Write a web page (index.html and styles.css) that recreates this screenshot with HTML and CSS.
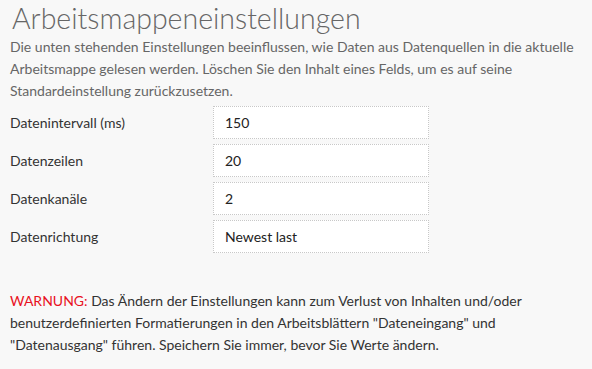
FILE: index.html
```html
<!doctype html>
<html lang="de">
    <head>
        <meta charset="UTF-8">
        <meta name="viewport" content="width=device-width, initial-scale=1.0">
        <title>Arbeitsmappeneinstellungen</title>

        <link rel="stylesheet" href="styles.css">
    </head>
    <body>
        <h1 class="title">Arbeitsmappeneinstellungen</h1>
        <p class="intro">
            Die unten stehenden Einstellungen beeinflussen, wie Daten aus Datenquellen in die aktuelle
            Arbeitsmappe gelesen werden. Löschen Sie den Inhalt eines Felds, um es auf seine
            Standardeinstellung zurückzusetzen.
        </p>

        <div class="settings">
            <label class="settings__label" for="interval">Datenintervall (ms)</label>
            <input class="settings__input" id="interval" type="text" value="150">

            <label class="settings__label" for="rows">Datenzeilen</label>
            <input class="settings__input" id="rows" type="text" value="20">

            <label class="settings__label" for="channels">Datenkanäle</label>
            <input class="settings__input" id="channels" type="text" value="2">

            <label class="settings__label" for="direction">Datenrichtung</label>
            <input class="settings__input" id="direction" type="text" value="Newest last">
        </div>

        <p class="warning">
            <span class="warning__tag">WARNUNG:</span> Das Ändern der Einstellungen kann zum Verlust von Inhalten und/oder
            benutzerdefinierten Formatierungen in den Arbeitsblättern "Dateneingang" und
            "Datenausgang" führen. Speichern Sie immer, bevor Sie Werte ändern.
        </p>
    </body>
</html>
```

FILE: styles.css
```css
/* base */
*,
*::before,
*::after {
    box-sizing: border-box;
    padding: 0;
    margin: 0;
}

body {
    padding: 0 10px;
    font-family: Lato, "Open Sans", sans-serif;
    font-size: 14px;
    line-height: 22px;
    color: #333;
    background-color: #f8f8f8;
}

.title {
    padding-inline-start: 2px;
    font-size: 28.5px;
    font-weight: 300;
    line-height: 36px;
    color: #666;
}

.intro {
    color: #666;
}

/* settings */
.settings {
    display: grid;
    grid-template-columns: 203px 216px;
    row-gap: 5px;
    align-items: center;
    margin-block-start: 4px;
}

.settings__input {
    block-size: 33px;
    padding: 0 11px;
    font: inherit;
    color: #222;
    background-color: #fff;
    border: 1px dotted #c8c8c8;
    outline: none;
}

/* warning */
.warning {
    margin-block-start: 37px;
}

.warning__tag {
    color: #e81123;
}
```
